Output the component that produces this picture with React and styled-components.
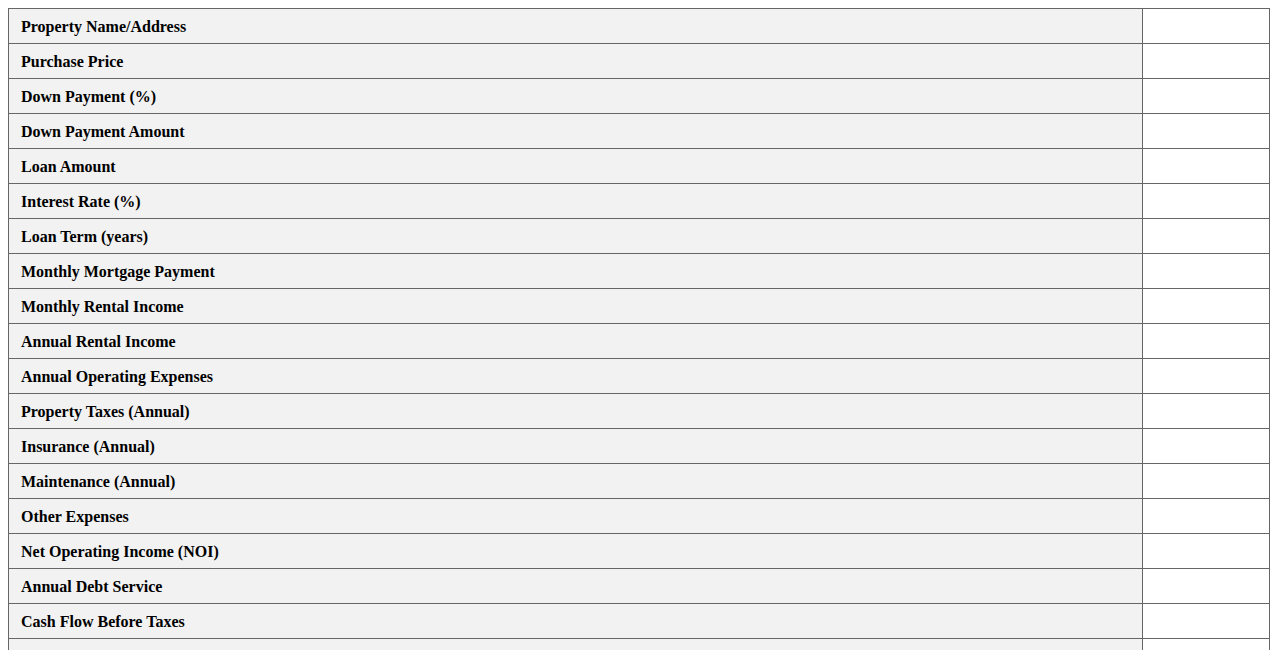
import React from "react";
import styled, { createGlobalStyle } from "styled-components";

const GlobalStyle = createGlobalStyle`
  body {
    margin: 8px;
    font-family: "Liberation Serif", "Times New Roman", serif;
    background: #fff;
  }
`;

const Table = styled.table`
  width: 100%;
  border-collapse: collapse;
  font-size: 16px;
`;

const Label = styled.th`
  text-align: left;
  font-weight: bold;
  background-color: #f2f2f2;
  border: 1px solid #666;
  padding: 9px 12px 7px;
  color: #000;
`;

const Value = styled.td`
  width: 10.1%;
  border: 1px solid #666;
  padding: 9px 12px 7px;
  background: #fff;
`;

const rows = [
  "Property Name/Address",
  "Purchase Price",
  "Down Payment (%)",
  "Down Payment Amount",
  "Loan Amount",
  "Interest Rate (%)",
  "Loan Term (years)",
  "Monthly Mortgage Payment",
  "Monthly Rental Income",
  "Annual Rental Income",
  "Annual Operating Expenses",
  "Property Taxes (Annual)",
  "Insurance (Annual)",
  "Maintenance (Annual)",
  "Other Expenses",
  "Net Operating Income (NOI)",
  "Annual Debt Service",
  "Cash Flow Before Taxes",
  "Cap Rate (%)",
  "Cash on Cash Return (%)",
];

export default function App() {
  return (
    <>
      <GlobalStyle />
      <Table>
        <tbody>
          {rows.map((label) => (
            <tr key={label}>
              <Label>{label}</Label>
              <Value></Value>
            </tr>
          ))}
        </tbody>
      </Table>
    </>
  );
}
